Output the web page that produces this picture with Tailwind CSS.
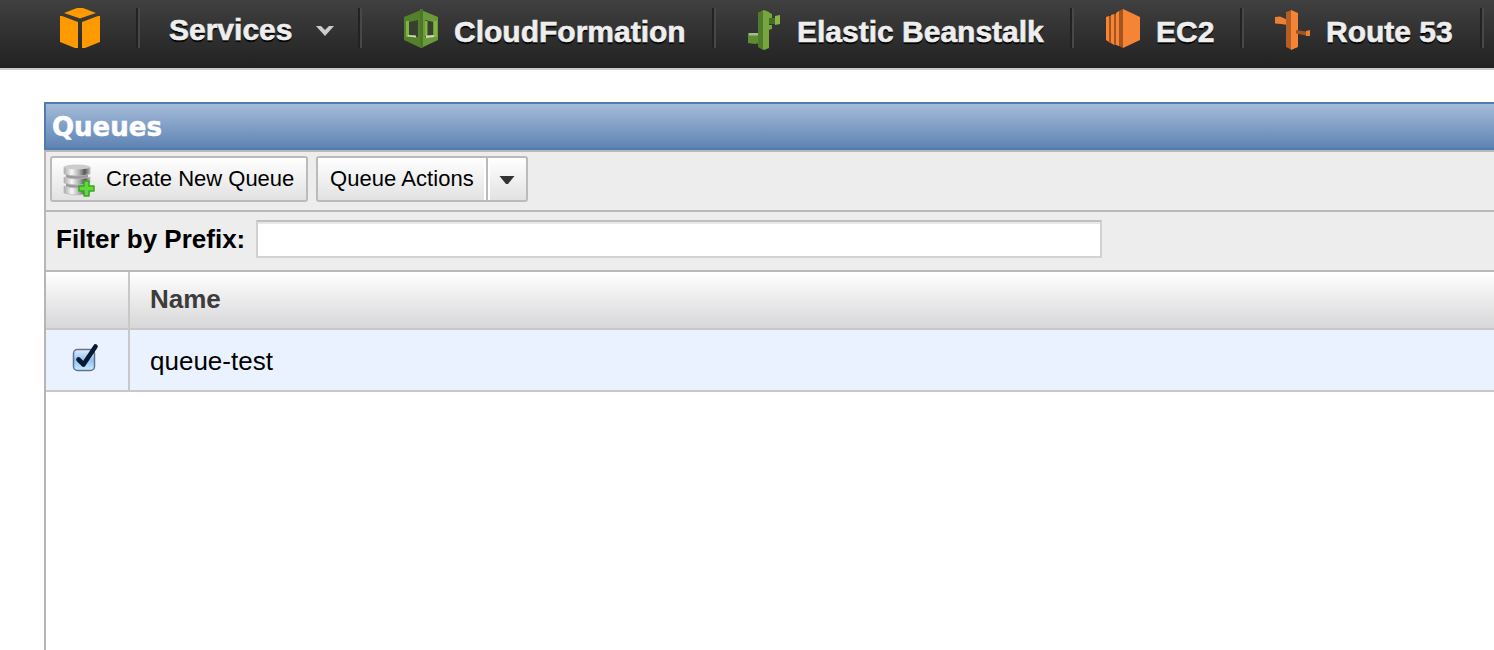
<!DOCTYPE html>
<html lang="en">
<head>
<meta charset="utf-8">
<title>Queues</title>
<script src="https://cdn.jsdelivr.net/npm/@tailwindcss/browser@4"></script>
</head>
<body class="bg-white w-[1494px] h-[650px] overflow-hidden font-['Liberation_Sans',Arial,sans-serif] text-black">
<nav class="h-[70px] border-b-2 border-[#cccccc] bg-linear-to-b from-[#404040] to-[#222222] flex items-start pt-2 whitespace-nowrap text-[30px] leading-[40px] font-bold text-[#eeeeee] overflow-hidden [-webkit-text-stroke:0.6px_#eeeeee]">
  <a class="w-[136px] h-10 pl-[59px] shrink-0">
    <svg class="w-[42px] h-10" viewBox="0 0 42 40" fill="#ff9900"><path d="M5 5 18 0h6l13 5-16 5.500z"/><path d="M1 8h2l16 6v26h-3L1 34zM41 8h-2l-16 6v26h3l15-6z"/></svg>
  </a>
  <a class="w-[222px] h-10 shrink-0 border-l-2 border-[#222222] flex">
    <span class="w-full border-l-2 border-[#484848] pl-[29px] flex">
      <span class="mt-[2px] [text-shadow:0_2px_1px_#000]">Services</span>
      <svg class="w-[18px] h-[11px] mt-[17.5px] ml-[23.5px]" viewBox="0 0 18 11"><path d="M0 0h5l4 4 4-4h5L9 10z" fill="#cccccc"/></svg>
    </span>
  </a>
  <a class="w-[354px] h-10 shrink-0 border-l-2 border-[#222222] flex">
    <span class="w-full border-l-2 border-[#484848] pl-[41px] flex">
      <svg class="w-[36px] h-10 mt-[1px]" viewBox="0 0 36 40"><path d="M1 8 18 1v38L1 31z" fill="#55802b"/><path d="M18 1 35 8v23L18 39z" fill="#6b9a38"/><path d="M6 13 15 11v17l-9-1zM22 11l8 2v14l-8 1z" fill="#38402f"/><path d="M3 12h3v16H3zM22 12h2.500v15H22zM31 12h3v16h-3z" fill="#82b344"/><path d="m5 26 8 .5v2l-8-1zM23 26.500l8-.5v2l-8 1z" fill="#d0dbbd"/><path d="M17 0h3v39h-3z" fill="#4c762a"/></svg>
      <span class="mt-[4px] ml-[15px] [text-shadow:0_2px_1px_#000]">CloudFormation</span>
    </span>
  </a>
  <a class="w-[358px] h-10 shrink-0 border-l-2 border-[#222222] flex">
    <span class="w-full border-l-2 border-[#484848] pl-[31px] flex">
      <svg class="w-[34px] h-[42px] mt-[1px] shrink-0" viewBox="0 0 34 42"><path d="M1 24h12v10l-5 1-7-1z" fill="#5d8c31"/><path d="M2 24h10v2.500H2z" fill="#a9b79a"/><path d="M11 4l6-3 5 2v36l-5 2-5-3z" fill="#76a63d"/><path d="M11 4l5-2v39l-5-3z" fill="#4f7b2a"/><path d="M21 3l4 2v7h-4zM21 16h4v4l-4 1z" fill="#76a63d"/><path d="M22 9h7v6h-7z" fill="#466f26"/><path d="M28 7l5-1v9l-5 1z" fill="#86b546"/></svg>
      <span class="mt-[4px] ml-[16px] [text-shadow:0_2px_1px_#000]">Elastic Beanstalk</span>
    </span>
  </a>
  <a class="w-[170px] h-10 shrink-0 border-l-2 border-[#222222] flex">
    <span class="w-full border-l-2 border-[#484848] pl-[31px] flex">
      <svg class="w-[36px] h-10 mt-[1px] shrink-0" viewBox="0 0 36 40"><path d="M1 8 4 7v26l-3-2zM6 6l3-1v31l-3-2zM11 4l3-2v35l-3-1z" fill="#f58534"/><path d="M4 7h2v27H4zM9 5h2v31H9zM14 2l4-2v39l-4-2z" fill="#a6541f"/><path d="m18 0 17 8v23l-17 8z" fill="#f58534"/></svg>
      <span class="mt-[4px] ml-[15px] [text-shadow:0_2px_1px_#000]">EC2</span>
    </span>
  </a>
  <a class="w-[240px] h-10 shrink-0 border-l-2 border-[#222222] flex">
    <span class="w-full border-l-2 border-[#484848] pl-[29px] flex">
      <svg class="w-[38px] h-[42px] mt-[1px] shrink-0" viewBox="0 0 38 42"><path d="m2 8 5-.5 8 3.500v5l-7-1-6-.5z" fill="#ed7f32"/><path d="M13 3 19 1v40l-6-3z" fill="#b45d24"/><path d="m18 1 7 3v34l-7 3z" fill="#f58534"/><path d="m23 21 10 1.500v4l-10-2z" fill="#a6541f"/><path d="m33 22 4-1v6h-4z" fill="#ed7f32"/></svg>
      <span class="mt-[4px] ml-[15px] [text-shadow:0_2px_1px_#000]">Route 53</span>
    </span>
  </a>
  <span class="w-1 h-10 shrink-0 border-l-2 border-[#222222] flex"><span class="border-l-2 border-[#484848]"></span></span>
</nav>
<main class="mt-8 ml-11 h-[548px] flex flex-col whitespace-nowrap">
  <h1 class="h-12 shrink-0 border-y-2 border-l-2 border-[#527cae] bg-linear-to-b from-[#a5bbd8] to-[#5e84b4] pl-[6px] text-[26px] leading-[47px] font-bold text-white font-['DejaVu_Sans',Verdana,sans-serif] [-webkit-text-stroke:0.5px_#fff]">Queues</h1>
  <section class="flex-1 border-l-2 border-[#b9b5b3]">
    <div class="h-[62px] border-y-2 border-[#b9b9b9] bg-[#ededed] flex pt-1 pl-1 gap-2 text-[22px] leading-[41px]">
      <button class="w-[258px] h-[46px] rounded-[3px] border-2 border-[#bbbbbb] bg-linear-to-b from-white to-[#e2e2e2] flex pl-[10px]">
        <svg class="w-[34px] h-[34px] mt-[5px]" viewBox="0 0 34 34"><defs><linearGradient id="metal"><stop offset="0" stop-color="#aaa"/><stop offset=".3" stop-color="#f8f8f8"/><stop offset=".6" stop-color="#aaa"/><stop offset=".8" stop-color="#555"/><stop offset="1" stop-color="#bbb"/></linearGradient></defs><path d="M4 4v25q11 4 22 0V4z" fill="#999"/><g fill="url(#metal)" stroke="#bbb" stroke-width=".8"><path d="M2 23v7q13 4 26 0v-7q-13 4-26 0z"/><path d="M2 14v6q13 4 26 0v-6q-13 4-26 0z"/><path d="M2 4v7q13 4 26 0V4z"/></g><ellipse cx="15" cy="4" rx="13" ry="2.500" fill="#ccc"/><path d="M22 18h5v5h5v5h-5v5h-5v-5h-5v-5h5z" fill="#62d83e" stroke="#3aa526" stroke-width="1.500" stroke-linejoin="round"/></svg>
        <span class="ml-[10px]">Create New Queue</span>
      </button>
      <div class="w-[212px] h-[46px] rounded-[3px] border-2 border-[#bbbbbb] bg-linear-to-b from-white to-[#e2e2e2] flex items-stretch">
        <button class="w-[168px] pl-3 pb-[2px] text-left border-r-2 border-white tracking-[0.05px]">Queue Actions</button>
        <button class="flex-1 border-l-2 border-[#bbbbbb] flex"><span class="flex-1 border-l-2 border-white pl-[9px] pt-[18px]"><svg class="w-4 h-[9px]" viewBox="0 0 16 9"><path d="M.5 0h15L9 8H7z" fill="#333"/></svg></span></button>
      </div>
    </div>
    <div class="h-[60px] border-b-2 border-[#b9b9b9] bg-[#ededed] flex pl-[10px] text-[26px] leading-[55px] font-bold">
      <label class="w-[200px]">Filter by Prefix:</label>
      <div class="mt-2 w-[846px] h-[38px] border-2 border-[#d2d2d2] border-t-[#bfbfbf] bg-white shadow-[inset_0_2px_0_#e8e8e8]"></div>
    </div>
    <div class="h-[58px] border-b-2 border-[#c8c8c8] bg-linear-to-b from-white to-[#d7d7d9] flex text-[26px] leading-[54px] font-bold text-[#3c3c3c]">
      <div class="w-[84px] border-r-2 border-[#c8c8c8]"></div>
      <div class="pl-5">Name</div>
    </div>
    <div class="h-[62px] border-b-2 border-[#c8c8c8] bg-[#eaf2ff] flex text-[26px] leading-[62px]">
      <div class="w-[84px] border-r-2 border-[#c8c8c8] pl-[26px] pt-[13px]">
        <svg class="w-7 h-[31px]" viewBox="0 0 28 31"><defs><linearGradient id="check" x2="0" y2="1"><stop stop-color="#e4effc"/><stop offset=".5" stop-color="#8fc1f2"/><stop offset="1" stop-color="#c8efff"/></linearGradient></defs><rect x="1.500" y="6.500" width="21" height="21" rx="4" fill="url(#check)" stroke="#65718c" stroke-width="1.500"/><path d="m6.500 16.500 5 5L23.500 3.500" fill="none" stroke="#081a33" stroke-width="4.600" stroke-linecap="round" stroke-linejoin="round"/></svg>
      </div>
      <div class="pl-5">queue-test</div>
    </div>
  </section>
</main>
</body>
</html>
